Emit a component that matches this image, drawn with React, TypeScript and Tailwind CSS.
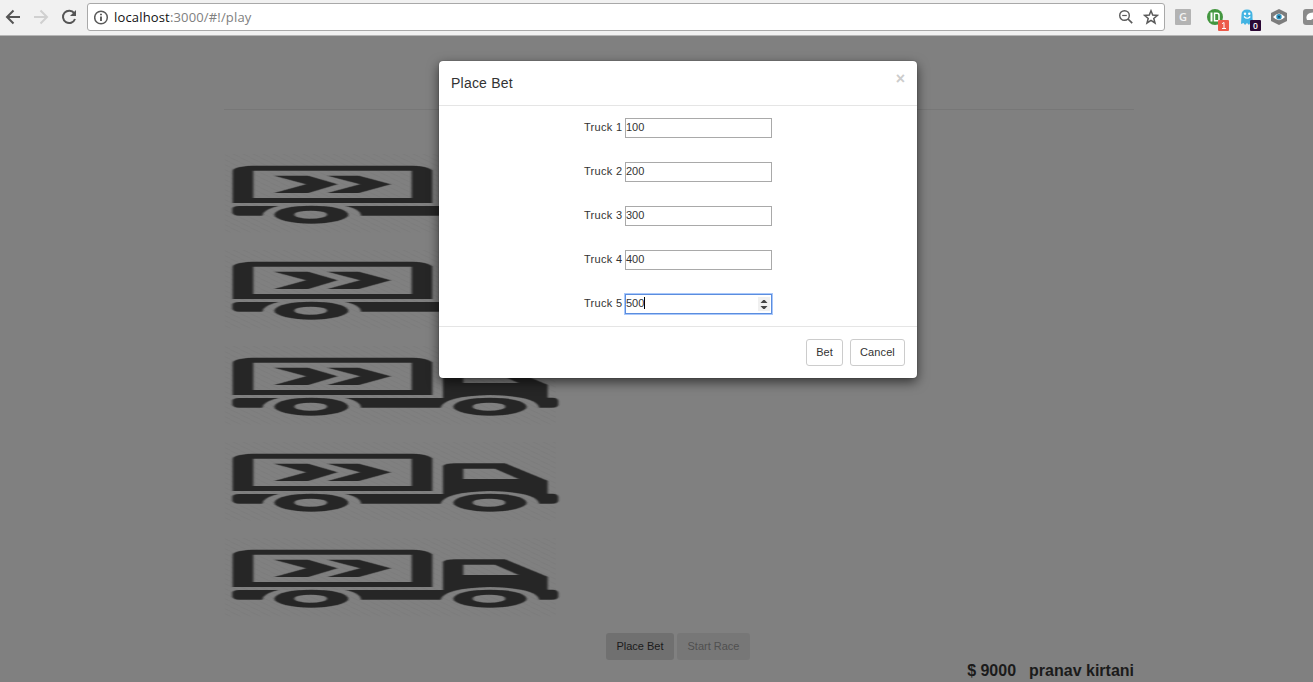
import React from "react";

const bets = [100, 200, 300, 400, 500];

function Truck({ id }: { id: number }) {
  const hatch = `hatch-${id}`;
  const soft = `soft-${id}`;
  return (
    <svg className="block h-24 w-[350px] shrink-0" viewBox="0 0 1050 288" fill="#282828">
      <defs>
        <pattern id={hatch} width="30" height="15" patternUnits="userSpaceOnUse">
          <path d="M-2 1L32 16M-2 -14L32 1M-2 16L32 31" stroke="#7b7b7b" strokeWidth="2.5" />
        </pattern>
        <filter id={soft} x="-2%" y="-2%" width="104%" height="104%">
          <feGaussianBlur stdDeviation="2.4 0.3" />
        </filter>
      </defs>
      <rect x="14" y="6" width="994" height="236" fill={`url(#${hatch})`} />
      <g filter={`url(#${soft})`}>
        <path
          fillRule="evenodd"
          d="M38 56Q40 44 94 41H582Q626 43 637 55V153H38ZM100 56V138H575V56Z"
        />
        <path d="M162 71H265L353 97L265 123H162L258 97ZM322 71H417L513 97L417 123H322L420 97Z" />
        <path
          fillRule="evenodd"
          d="M37 170Q38 163 56 162H176Q132 171 127 191H56Q40 190 37 182ZM376 162H669V77Q680 70 705 70H855L983 122V161H1002Q1013 163 1015 170V182Q1013 191 997 191H958Q950 156 811 153Q672 156 662 191H423Q421 171 376 162ZM730 86V117H896L825 86Z"
        />
        <path
          fillRule="evenodd"
          d="M163 188A111 27 0 1 1 385 188A111 27 0 1 1 163 188ZM223 188A49 12 0 1 0 321 188A49 12 0 1 0 223 188Z"
        />
        <path
          fillRule="evenodd"
          d="M700 188A110 27 0 1 1 920 188A110 27 0 1 1 700 188ZM758 188A49 12 0 1 0 856 188A49 12 0 1 0 758 188Z"
        />
      </g>
    </svg>
  );
}

function Toolbar() {
  return (
    <header className="flex h-9 shrink-0 items-start border-b border-[#b6b6b6] bg-[#f1f1f1]">
      <svg className="h-[35px] w-[87px] shrink-0" viewBox="0 0 87 35" fill="none" strokeWidth="2">
        <path d="M20 17H7.5M13.5 10.5L7 17L13.5 23.5" stroke="#555" />
        <path d="M34 17H46.5M40.5 10.5L47 17L40.5 23.5" stroke="#d0d0d0" />
        <path d="M74.2 13.2A6.2 6.2 0 1 0 75 19" stroke="#555" />
        <path d="M76 10V16H70Z" fill="#555" />
      </svg>
      <div className="mt-[3px] flex h-7 w-[1078px] shrink-0 items-center rounded-[3px] border border-[#a9a9a9] bg-white pl-[6px] pr-[5px]">
        <svg className="mr-[5px] size-[15px]" viewBox="0 0 15 15" fill="none" stroke="#5a5a5a">
          <circle cx="7" cy="7.500" r="6.300" strokeWidth="1.5" />
          <path d="M7 6.5V11M7 3.700V5.300" strokeWidth="1.9" />
        </svg>
        <div className="flex-1 whitespace-nowrap font-['Open_Sans',sans-serif] text-[13px] leading-[18px] tracking-[0.16px] text-[#808080]">
          <span className="text-[#111]">localhost</span>:3000/#!/play
        </div>
        <svg className="mr-[9px] size-4" viewBox="0 0 16 16" fill="none" stroke="#5a5a5a">
          <circle cx="6.500" cy="6.500" r="4.800" strokeWidth="1.4" />
          <path d="M10 10L14.200 14.200" strokeWidth="1.7" />
          <path d="M4.200 6.500H8.800" strokeWidth="1.2" />
        </svg>
        <svg className="size-4" viewBox="0 0 16 16" fill="none" stroke="#5a5a5a" strokeWidth="1.5">
          <path d="M8 1.800L9.700 6.100L14.400 6.400L10.800 9.400L12 14L8 11.400L4 14L5.200 9.400L1.600 6.400L6.300 6.100Z" />
        </svg>
      </div>
      <svg
        className="h-[35px] w-[148px] shrink-0 font-['Open_Sans',sans-serif]"
        viewBox="1165 0 148 35"
      >
        <rect x="1175" y="9" width="16" height="16" rx="1" fill="#b3b3b3" />
        <text x="1183" y="21" textAnchor="middle" fontSize="11" fontWeight="600" fill="#f3f3f3">G</text>
        <circle cx="1215" cy="17" r="8" fill="#43963f" />
        <path d="M1211.500 12.500V21.500" stroke="#fff" strokeWidth="2" />
        <path d="M1214.500 13.200H1217Q1219 13.200 1219 15.200V20.800H1214.500Z" fill="none" stroke="#fff" strokeWidth="1.5" />
        <rect x="1218" y="20" width="11" height="11" rx="1" fill="#ec5a49" />
        <path d="M1222 28.500H1226M1224 28.500V22.500L1222 23.700" fill="none" stroke="#fff" strokeWidth="1" />
        <path d="M1241.500 15Q1241.500 9.500 1247 9.500T1252.500 15V19L1254 23L1250.500 22.500L1249 25L1247 23L1245 25L1243.500 23L1241 24Z" fill="#43b4e3" />
        <circle cx="1245" cy="13.800" r="1.200" fill="#fff" />
        <circle cx="1249.300" cy="13.800" r="1.200" fill="#fff" />
        <path d="M1244 16.500Q1247.200 20 1250.300 16.500" fill="none" stroke="#fff" strokeWidth="1.200" />
        <rect x="1250" y="20" width="11" height="11" rx="1" fill="#2b0734" />
        <text x="1255.500" y="29" textAnchor="middle" fontSize="8.5" fontWeight="600" fill="#fff">0</text>
        <path d="M1279 9L1287 13V21L1279 25L1271 21V13Z" fill="#7d7d7d" />
        <path d="M1273 17Q1279 10 1285 17Q1279 23.500 1273 17Z" fill="#fff" />
        <circle cx="1279" cy="16.800" r="2.700" fill="#2b91bd" />
        <circle cx="1279" cy="16.800" r="0.900" fill="#16364b" />
        <rect x="1303" y="9" width="16" height="16" rx="3" fill="#8b8b8b" />
        <path d="M1307 20Q1305 15 1310 13L1316 12V17L1311 20Z" fill="#fff" />
      </svg>
    </header>
  );
}

function BetDialog() {
  return (
    <div
      role="dialog"
      className="absolute left-[439px] top-[25px] flex h-[317px] w-[478px] flex-col rounded-[4px] bg-white shadow-[0_4px_12px_rgba(0,0,0,0.6),0_0_1px_rgba(0,0,0,0.6)]"
    >
      <div className="flex h-[45px] shrink-0 justify-between border-b border-[#e5e5e5] pl-3 pr-3">
        <h4 className="mt-3 text-[14px] leading-5 tracking-[0.22px]">Place Bet</h4>
        <button className="mt-[10px] h-4 text-[16px] font-bold leading-4 text-[#ccc]">×</button>
      </div>
      <div className="flex flex-1 flex-col items-center gap-6 pt-3">
        {bets.map((bet, i) => (
          <label key={bet} className="flex h-5 items-center">
            <span className="w-[41px] whitespace-nowrap pb-[2px] leading-4 tracking-[0.3px]">
              Truck {i + 1}
            </span>
            <span
              className={
                i === 4
                  ? "flex h-5 w-[147px] items-center justify-between border border-[#5b8dde] bg-white pr-px shadow-[0_0_0_1px_#a9c8fb]"
                  : "flex h-5 w-[147px] items-center border border-[#a9a9a9] bg-white"
              }
            >
              <span
                className={
                  i === 4
                    ? "-mt-[2px] flex h-3 items-center border-r border-black"
                    : "pb-[2px] leading-4"
                }
              >
                {bet}
              </span>
              {i === 4 && (
                <svg className="h-[14px] w-3" viewBox="0 0 12 14">
                  <path d="M0 0H12V14H0Z" fill="#f0f0f0" />
                  <path d="M2.500 6L5.300 3H6.700L9.500 6ZM2.500 9L5.300 12H6.700L9.500 9Z" fill="#444" />
                </svg>
              )}
            </span>
          </label>
        ))}
      </div>
      <div className="flex h-[52px] shrink-0 justify-end gap-[7px] border-t border-[#e5e5e5] pr-3 pt-3">
        <button className="h-[27px] w-[37px] rounded-[3px] border border-[#ccc]">Bet</button>
        <button className="h-[27px] w-[55px] rounded-[3px] border border-[#ccc] tracking-[0.1px]">Cancel</button>
      </div>
    </div>
  );
}

export default function App() {
  return (
    <div className="flex h-[682px] w-[1313px] flex-col overflow-hidden font-['Liberation_Sans',Arial,sans-serif] text-[11px] text-[#333]">
      <Toolbar />
      <main className="relative flex-1 bg-[#808080]">
        <div className="ml-[224px] w-[910px] pt-[73px]">
          <hr className="border-[#777]" />
          <div className="-ml-1 flex flex-col pt-[42px]">
            {bets.map((bet) => (
              <Truck key={bet} id={bet} />
            ))}
          </div>
          <div className="-mt-px flex gap-[3px] pl-[382px] text-[#1b1b1b]">
            <button className="mt-[2px] h-[27px] w-[68px] rounded-[3px] bg-[#707070]">Place Bet</button>
            <button className="mt-[2px] h-[27px] w-[73px] rounded-[3px] bg-[#777] text-[#505050]">Start Race</button>
          </div>
          <div className="flex justify-end gap-[13px] text-[16px] font-bold leading-[22px] text-[#1b1b1b]">
            <span>$ 9000</span>
            <span>pranav kirtani</span>
          </div>
        </div>
        <BetDialog />
      </main>
    </div>
  );
}
